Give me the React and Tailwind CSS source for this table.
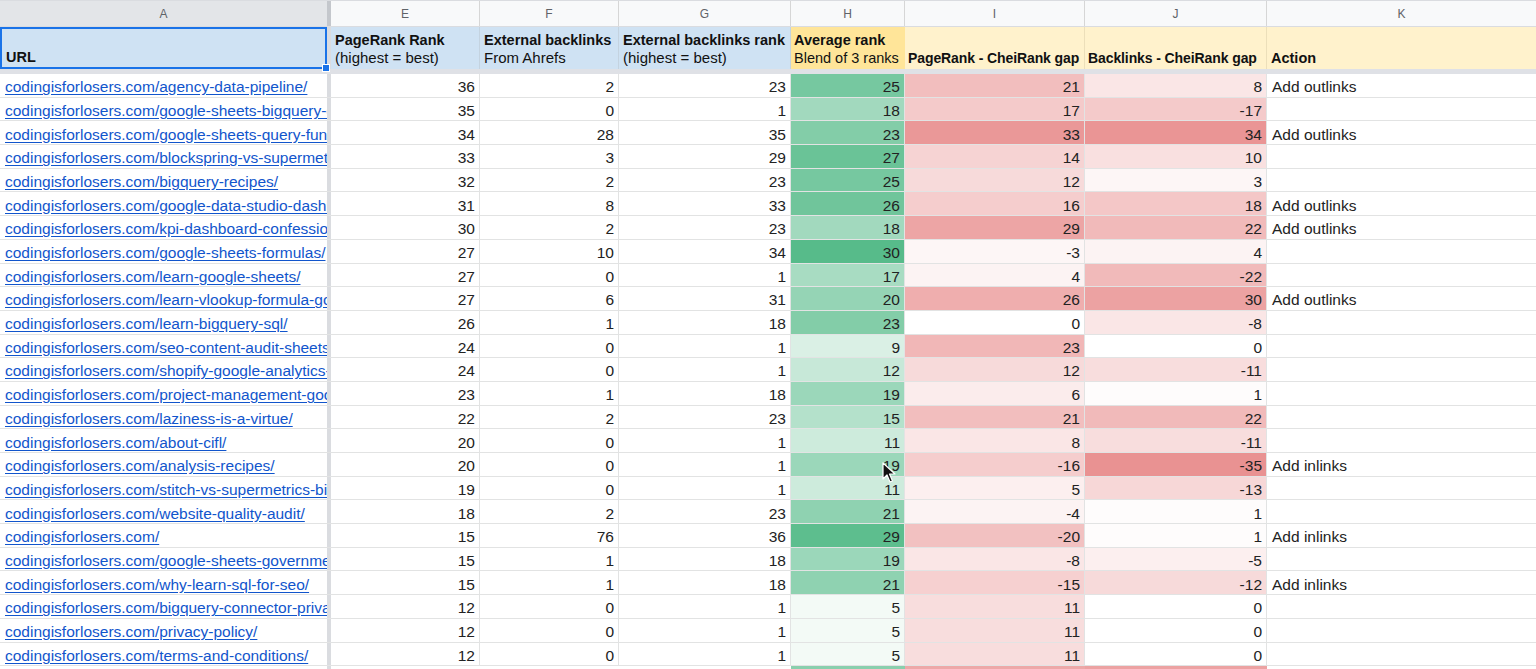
import React from "react";

const rows = [
  ["codingisforlosers.com/agency-data-pipeline/", 36, 2, 23, 25, 21, 8, "Add outlinks"],
  ["codingisforlosers.com/google-sheets-bigquery-connector/", 35, 0, 1, 18, 17, -17, ""],
  ["codingisforlosers.com/google-sheets-query-function/", 34, 28, 35, 23, 33, 34, "Add outlinks"],
  ["codingisforlosers.com/blockspring-vs-supermetrics/", 33, 3, 29, 27, 14, 10, ""],
  ["codingisforlosers.com/bigquery-recipes/", 32, 2, 23, 25, 12, 3, ""],
  ["codingisforlosers.com/google-data-studio-dashboards/", 31, 8, 33, 26, 16, 18, "Add outlinks"],
  ["codingisforlosers.com/kpi-dashboard-confessions/", 30, 2, 23, 18, 29, 22, "Add outlinks"],
  ["codingisforlosers.com/google-sheets-formulas/", 27, 10, 34, 30, -3, 4, ""],
  ["codingisforlosers.com/learn-google-sheets/", 27, 0, 1, 17, 4, -22, ""],
  ["codingisforlosers.com/learn-vlookup-formula-google-sheets/", 27, 6, 31, 20, 26, 30, "Add outlinks"],
  ["codingisforlosers.com/learn-bigquery-sql/", 26, 1, 18, 23, 0, -8, ""],
  ["codingisforlosers.com/seo-content-audit-sheets/", 24, 0, 1, 9, 23, 0, ""],
  ["codingisforlosers.com/shopify-google-analytics-tracking/", 24, 0, 1, 12, 12, -11, ""],
  ["codingisforlosers.com/project-management-google-sheets/", 23, 1, 18, 19, 6, 1, ""],
  ["codingisforlosers.com/laziness-is-a-virtue/", 22, 2, 23, 15, 21, 22, ""],
  ["codingisforlosers.com/about-cifl/", 20, 0, 1, 11, 8, -11, ""],
  ["codingisforlosers.com/analysis-recipes/", 20, 0, 1, 19, -16, -35, "Add inlinks"],
  ["codingisforlosers.com/stitch-vs-supermetrics-bigquery/", 19, 0, 1, 11, 5, -13, ""],
  ["codingisforlosers.com/website-quality-audit/", 18, 2, 23, 21, -4, 1, ""],
  ["codingisforlosers.com/", 15, 76, 36, 29, -20, 1, "Add inlinks"],
  ["codingisforlosers.com/google-sheets-government-data/", 15, 1, 18, 19, -8, -5, ""],
  ["codingisforlosers.com/why-learn-sql-for-seo/", 15, 1, 18, 21, -15, -12, "Add inlinks"],
  ["codingisforlosers.com/bigquery-connector-privacy-policy/", 12, 0, 1, 5, 11, 0, ""],
  ["codingisforlosers.com/privacy-policy/", 12, 0, 1, 5, 11, 0, ""],
  ["codingisforlosers.com/terms-and-conditions/", 12, 0, 1, 5, 11, 0, ""],
];

const mix = (t, end) => {
  const c = Math.max(0, Math.min(1, t));
  const r = Math.round(255 + (end[0] - 255) * c);
  const g = Math.round(255 + (end[1] - 255) * c);
  const b = Math.round(255 + (end[2] - 255) * c);
  return `rgb(${r},${g},${b})`;
};
const green = (v) => mix((v - 3) / 27, [87, 187, 138]);
const red = (v) => mix(Math.abs(v) / 35, [233, 146, 146]);

const Num = ({ w, v, bg }) => (
  <div
    className={`${w} shrink-0 h-full border-r border-[#e2e3e3] flex items-end justify-end pr-[4px] pb-[2px] text-[#222]`}
    style={bg ? { backgroundColor: bg } : undefined}
  >
    {v}
  </div>
);

function Cursor() {
  return (
    <svg className="absolute left-[882px] top-[462px]" width="14" height="22" viewBox="0 0 14 22">
      <path d="M1 1 L1 17 L5 13 L8 20 L10.5 19 L7.5 12 L13 12 Z" fill="#111" stroke="#fff" strokeWidth="1.2" strokeLinejoin="round" />
    </svg>
  );
}

export default function App() {
  return (
    <div className="relative w-[1536px] h-[669px] overflow-hidden bg-white font-['Liberation_Sans',Arial,sans-serif] text-[15.5px] leading-none">
      {/* column letters */}
      <div className="flex h-[27px] bg-[#f8f9fa] border-t border-[#dadce0] border-b border-[#c7c7c7] text-[12px] text-[#5f6368]">
        <div className="w-[327px] shrink-0 bg-[#e3e5e8] flex items-center justify-center">A</div>
        <div className="w-[4px] shrink-0 bg-[#c4c7cc]" />
        <div className="w-[149px] shrink-0 border-r border-[#d6d6d6] flex items-center justify-center">E</div>
        <div className="w-[139px] shrink-0 border-r border-[#d6d6d6] flex items-center justify-center">F</div>
        <div className="w-[172px] shrink-0 border-r border-[#d6d6d6] flex items-center justify-center">G</div>
        <div className="w-[114px] shrink-0 border-r border-[#d6d6d6] flex items-center justify-center">H</div>
        <div className="w-[180px] shrink-0 border-r border-[#d6d6d6] flex items-center justify-center">I</div>
        <div className="w-[182px] shrink-0 border-r border-[#d6d6d6] flex items-center justify-center">J</div>
        <div className="w-[269px] shrink-0 flex items-center justify-center">K</div>
      </div>

      {/* header row */}
      <div className="flex h-[42px] text-[#111] text-[14.5px] leading-[18px]">
        <div className="relative w-[327px] shrink-0 bg-[#cfe2f3] border-2 border-[#1a73e8] flex items-end pl-[4px] pb-[1px] font-bold">
          URL
          <div className="absolute right-[-5px] bottom-[-5px] w-[8px] h-[8px] bg-[#1a73e8] border border-white" />
        </div>
        <div className="w-[4px] shrink-0 bg-[#dadce0]" />
        <div className="w-[149px] shrink-0 bg-[#cfe2f3] border-r border-[#c4d3e0] flex flex-col justify-end pl-[4px] pb-[2px]">
          <span className="font-bold">PageRank Rank</span>
          <span className="text-[15px]">(highest = best)</span>
        </div>
        <div className="w-[139px] shrink-0 bg-[#cfe2f3] border-r border-[#c4d3e0] flex flex-col justify-end pl-[4px] pb-[2px]">
          <span className="font-bold">External backlinks</span>
          <span className="text-[15px]">From Ahrefs</span>
        </div>
        <div className="w-[172px] shrink-0 bg-[#cfe2f3] border-r border-[#c4d3e0] flex flex-col justify-end pl-[4px] pb-[2px]">
          <span className="font-bold">External backlinks rank</span>
          <span className="text-[15px]">(highest = best)</span>
        </div>
        <div className="w-[114px] shrink-0 bg-[#ffe599] flex flex-col justify-end pl-[3px] pb-[2px] whitespace-nowrap">
          <span className="font-bold">Average rank</span>
          <span>Blend of 3 ranks</span>
        </div>
        <div className="w-[180px] shrink-0 bg-[#fff2cc] border-r border-[#ecdfba] flex items-end pl-[3px] pb-[2px] font-bold whitespace-nowrap text-[14px] tracking-[-0.1px]">
          PageRank - CheiRank gap
        </div>
        <div className="w-[182px] shrink-0 bg-[#fff2cc] border-r border-[#ecdfba] flex items-end pl-[3px] pb-[2px] font-bold whitespace-nowrap text-[14px] tracking-[-0.1px]">
          Backlinks - CheiRank gap
        </div>
        <div className="w-[269px] shrink-0 bg-[#fff2cc] flex items-end pl-[4px] pb-[2px] font-bold">Action</div>
      </div>

      {/* freeze band */}
      <div className="h-[5px] bg-[#dfe1e6]" />

      {/* data rows */}
      {rows.map((r, i) => (
        <div key={i} className="flex h-[23.7px] border-b border-[#e2e3e3]">
          <div className="w-[327px] shrink-0 h-full flex items-end pb-[2px] pl-[5px] overflow-hidden whitespace-nowrap">
            <span className="text-[#1155cc] underline underline-offset-2">{r[0]}</span>
          </div>
          <div className="w-[4px] shrink-0 bg-[#dadce0]" />
          <Num w="w-[149px]" v={r[1]} />
          <Num w="w-[139px]" v={r[2]} />
          <Num w="w-[172px]" v={r[3]} />
          <Num w="w-[114px]" v={r[4]} bg={green(r[4])} />
          <Num w="w-[180px]" v={r[5]} bg={red(r[5])} />
          <Num w="w-[182px]" v={r[6]} bg={red(r[6])} />
          <div className="w-[269px] shrink-0 h-full flex items-end pb-[2px] pl-[5px] text-[#222]">{r[7]}</div>
        </div>
      ))}
      <div className="flex h-[24px]">
        <div className="w-[327px] shrink-0" />
        <div className="w-[4px] shrink-0 bg-[#dadce0]" />
        <div className="w-[460px] shrink-0" />
        <div className="w-[114px] shrink-0" style={{ backgroundColor: green(22) }} />
        <div className="w-[180px] shrink-0" style={{ backgroundColor: red(28) }} />
        <div className="w-[182px] shrink-0" style={{ backgroundColor: red(30) }} />
      </div>

      <Cursor />
    </div>
  );
}
